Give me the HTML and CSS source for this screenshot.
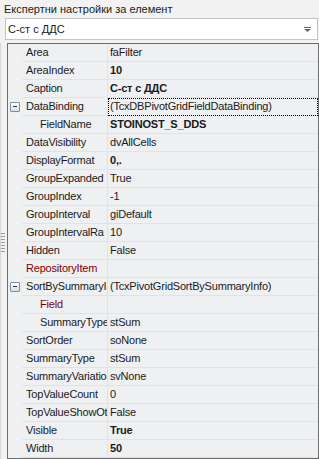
FILE: index.html
```html
<!DOCTYPE html>
<html lang="bg">
<head>
  <meta charset="UTF-8">
  <meta name="viewport" content="width=device-width, initial-scale=1.0">
  <link rel="stylesheet" href="styles.css">
  <title>Експертни настройки</title>
</head>
<body>
  <div class="title">Експертни настройки за елемент</div>
  <div class="combo">
    <span>С-ст с ДДС</span>
    <svg class="combo-arrow" width="7" height="5" viewBox="0 0 7 5">
      <rect x="0" y="0" width="7" height="1" fill="#6a6a6a"/>
      <path d="M0 2 H7 L3.5 5 Z" fill="#6a6a6a"/>
    </svg>
  </div>

  <div class="inspector">
    <div class="grip-col"><div class="grip"></div></div>

    <div class="grid">
      <!-- редове на инспектора -->
      <div class="row"><div class="gutter"></div><div class="name">Area</div><div class="value">faFilter</div></div>
      <div class="row"><div class="gutter"></div><div class="name">AreaIndex</div><div class="value bold">10</div></div>
      <div class="row"><div class="gutter"></div><div class="name">Caption</div><div class="value bold">С-ст с ДДС</div></div>
      <div class="row">
        <div class="gutter"><span class="expand"></span></div>
        <div class="name">DataBinding</div>
        <div class="value focused">(TcxDBPivotGridFieldDataBinding)</div>
      </div>
      <div class="row"><div class="gutter"></div><div class="name sub">FieldName</div><div class="value bold">STOINOST_S_DDS</div></div>
      <div class="row"><div class="gutter"></div><div class="name">DataVisibility</div><div class="value">dvAllCells</div></div>
      <div class="row"><div class="gutter"></div><div class="name">DisplayFormat</div><div class="value bold">0,.</div></div>
      <div class="row"><div class="gutter"></div><div class="name">GroupExpanded</div><div class="value">True</div></div>
      <div class="row"><div class="gutter"></div><div class="name">GroupIndex</div><div class="value">-1</div></div>
      <div class="row"><div class="gutter"></div><div class="name">GroupInterval</div><div class="value">giDefault</div></div>
      <div class="row"><div class="gutter"></div><div class="name">GroupIntervalRa</div><div class="value">10</div></div>
      <div class="row"><div class="gutter"></div><div class="name">Hidden</div><div class="value">False</div></div>
      <div class="row"><div class="gutter"></div><div class="name link">RepositoryItem</div><div class="value"></div></div>
      <div class="row">
        <div class="gutter"><span class="expand"></span></div>
        <div class="name">SortBySummaryI</div>
        <div class="value">(TcxPivotGridSortBySummaryInfo)</div>
      </div>
      <div class="row"><div class="gutter"></div><div class="name sub link">Field</div><div class="value"></div></div>
      <div class="row"><div class="gutter"></div><div class="name sub">SummaryType</div><div class="value">stSum</div></div>
      <div class="row"><div class="gutter"></div><div class="name">SortOrder</div><div class="value">soNone</div></div>
      <div class="row"><div class="gutter"></div><div class="name">SummaryType</div><div class="value">stSum</div></div>
      <div class="row"><div class="gutter"></div><div class="name">SummaryVariatio</div><div class="value">svNone</div></div>
      <div class="row"><div class="gutter"></div><div class="name">TopValueCount</div><div class="value">0</div></div>
      <div class="row"><div class="gutter"></div><div class="name">TopValueShowOt</div><div class="value">False</div></div>
      <div class="row"><div class="gutter"></div><div class="name">Visible</div><div class="value bold">True</div></div>
      <div class="row"><div class="gutter"></div><div class="name">Width</div><div class="value bold">50</div></div>
    </div>
  </div>
</body>
</html>
```

FILE: styles.css
```css
body {
  margin: 0;
  background-color: #f2f2f2;
  font-family: 'Liberation Sans', Arial, sans-serif;
  font-size: 11px;
  color: #1a1a1a;
  height: 459px;
  overflow: hidden;
}

.title {
  height: 18px;
  line-height: 18px;
  padding-left: 4px;
  white-space: nowrap;
}

.combo {
  display: flex;
  align-items: center;
  justify-content: space-between;
  height: 20px;
  margin: 0 1px 0 5px;
  padding: 0 6px 0 2px;
  background-color: #fff;
  border: 1px solid #c3c3c3;
}

.combo-arrow {
  margin-top: 1px;
}

.inspector {
  display: flex;
  margin-top: 3px;
}

.grip-col {
  width: 6px;
  border-left: 1px solid #d6d6d6;
}

.grip {
  width: 4px;
  height: 20px;
  margin-top: 190px;
  background: repeating-linear-gradient(to bottom, #9a9a9a 0, #9a9a9a 1px, transparent 1px, transparent 3px);
}

.grid {
  width: 310px;
  background-color: #eff0f2;
  border: 1px solid #6d6d6d;
  letter-spacing: -0.2px;
}

.row {
  display: grid;
  grid-template-columns: 14px 86px 1fr;
  height: 18px;
}

.gutter {
  display: flex;
  align-items: center;
  justify-content: center;
}

.name,
.value {
  line-height: 17px;
  border-bottom: 1px solid #e1e2e5;
  white-space: nowrap;
  overflow: hidden;
}

.name {
  padding-left: 4px;
  border-right: 1px solid #e1e2e5;
}

.name.sub {
  padding-left: 18px;
}

.name.link {
  color: #800000;
}

.value {
  padding-left: 2px;
}

.bold {
  font-weight: bold;
}

.focused {
  outline: 1px dotted #000;
  outline-offset: -1px;
}

.expand {
  position: relative;
  width: 8px;
  height: 8px;
  border: 1px solid #7f8fa3;
  border-radius: 1px;
  background: linear-gradient(#ffffff, #d5dde8);
}

.expand::after {
  content: '';
  position: absolute;
  left: 2px;
  top: 3px;
  width: 4px;
  height: 1px;
  background-color: #333;
}
```
